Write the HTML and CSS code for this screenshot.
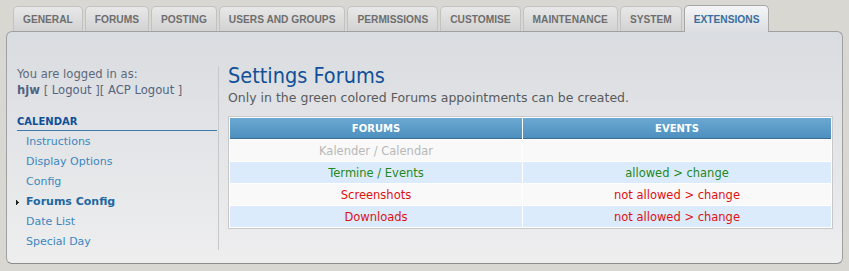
FILE: index.html
```html
<!DOCTYPE html>
<html>
<head>
    <link rel="stylesheet" href="styles.css">
</head>
<body>
    <div class="tabs">
        <a class="tab">GENERAL</a>
        <a class="tab">FORUMS</a>
        <a class="tab">POSTING</a>
        <a class="tab">USERS AND GROUPS</a>
        <a class="tab">PERMISSIONS</a>
        <a class="tab">CUSTOMISE</a>
        <a class="tab">MAINTENANCE</a>
        <a class="tab">SYSTEM</a>
        <a class="tab active">EXTENSIONS</a>
    </div>

    <div class="panel">
        <div class="sidebar">
            <div class="login">
                You are logged in as:<br>
                <strong>hjw</strong> [ <a>Logout</a> ][ <a>ACP Logout</a> ]
            </div>
            <div class="menu-title">CALENDAR</div>
            <ul class="menu">
                <li><a>Instructions</a></li>
                <li><a>Display Options</a></li>
                <li><a>Config</a></li>
                <li class="current">
                    <svg class="marker" width="4" height="5" viewBox="0 0 4 5"><path d="M0 0h1v1h1v1h1v1h-1v1h-1v1h-1z" fill="#222"/></svg>
                    <a>Forums Config</a>
                </li>
                <li><a>Date List</a></li>
                <li><a>Special Day</a></li>
            </ul>
        </div>

        <div class="main">
            <h1>Settings Forums</h1>
            <p class="explain">Only in the green colored Forums appointments can be created.</p>
            <table class="table">
                <thead>
                    <tr><th class="col-forum">FORUMS</th><th>EVENTS</th></tr>
                </thead>
                <tbody>
                    <tr class="row1"><td class="disabled">Kalender / Calendar</td><td></td></tr>
                    <tr class="row2"><td class="ok">Termine / Events</td><td class="ok">allowed &gt; change</td></tr>
                    <tr class="row1"><td class="no">Screenshots</td><td class="no">not allowed &gt; change</td></tr>
                    <tr class="row2"><td class="no">Downloads</td><td class="no">not allowed &gt; change</td></tr>
                </tbody>
            </table>
        </div>
    </div>
</body>
</html>
```

FILE: styles.css
```css
:root {
    --page: #d9d7d1;
    --text: #536482;
    --blue: #115098;
    --link: #3b87c1;
    --green: #228822;
    --red: #dd1111;
}

body {
    margin: 0;
    background-color: var(--page);
    font-family: 'DejaVu Sans', Verdana, sans-serif;
    font-size: 11px;
    color: var(--text);
}

a {
    cursor: pointer;
}

.tabs {
    display: flex;
    align-items: flex-end;
    gap: 2px;
    padding: 5px 0 0 13px;
    height: 26px;
    position: relative;
    z-index: 1;
}

.tab {
    display: block;
    height: 22px;
    line-height: 22px;
    padding: 2px 9px 0;
    border: 1px solid #c2c2c2;
    border-bottom: none;
    border-radius: 5px 5px 0 0;
    background: linear-gradient(#e8e8e8, #d2d2d2);
    font-family: 'Liberation Sans', Arial, sans-serif;
    font-weight: bold;
    font-size: 10.2px;
    color: #6e6e6e;
}

.tab.active {
    height: 24px;
    line-height: 24px;
    border-color: #a8a8a8;
    background: linear-gradient(#f4f5f6, #dbdee2);
    color: #3b6d9e;
    margin-bottom: -1px;
}

.panel {
    display: flex;
    margin: 0 6px;
    height: 197px;
    padding: 34px 11px 0 10px;
    border: 1px solid #a0a0a0;
    border-bottom-color: #8c8c8c;
    border-radius: 6px;
    background: linear-gradient(#d9dce0, #eeeeef);
}

.sidebar {
    width: 200px;
    flex-shrink: 0;
}

.login {
    line-height: 16px;
    font-size: 11.6px;
    color: #5e6a7a;
}

.login strong {
    color: #536482;
}

.login a {
    color: #536482;
}

.menu-title {
    margin-top: 16px;
    padding-bottom: 1px;
    border-bottom: 1px solid #3d78aa;
    line-height: 15px;
    font-size: 10px;
    font-weight: bold;
    color: var(--blue);
}

.menu {
    list-style: none;
    margin: 1px 0 0;
    padding: 0;
}

.menu li {
    position: relative;
    height: 20px;
    line-height: 20px;
    padding-left: 9px;
}

.menu li a {
    color: var(--link);
}

.menu li.current a {
    font-weight: bold;
    color: #1f67a2;
}

.marker {
    position: absolute;
    left: -1px;
    top: 8px;
}

.main {
    flex: 1;
    height: 184px;
    margin-left: 1px;
    padding-left: 9px;
    border-left: 1px solid #c8c8c8;
}

h1 {
    margin: -2px 0 0;
    font-family: 'DejaVu Sans Condensed', 'DejaVu Sans', sans-serif;
    font-weight: normal;
    font-size: 21.5px;
    line-height: 24px;
    color: var(--blue);
}

.explain {
    margin: 2px 0 0;
    line-height: 16px;
    font-size: 12.5px;
    color: #5a5a5a;
}

.table {
    width: 605px;
    margin-top: 10px;
    border: 1px solid #c8c8c8;
    padding: 0;
    border-spacing: 1px;
    background-color: #fff;
}

.table th {
    height: 20px;
    padding: 0;
    background: linear-gradient(#6aa9d2, #4d8fbf);
    border-bottom: 1px solid #3a6d94;
    font-size: 10px;
    font-weight: bold;
    color: #fff;
    text-align: center;
}

.table th.col-forum {
    width: 292px;
}

.table td {
    height: 21px;
    padding: 0;
    font-size: 11.5px;
    text-align: center;
}

.row1 td { background-color: #f9f9f9; }
.row2 td { background-color: #dcebfb; }

.disabled { color: #b8b8b8; }
.ok { color: var(--green); }
.no { color: var(--red); }
```
